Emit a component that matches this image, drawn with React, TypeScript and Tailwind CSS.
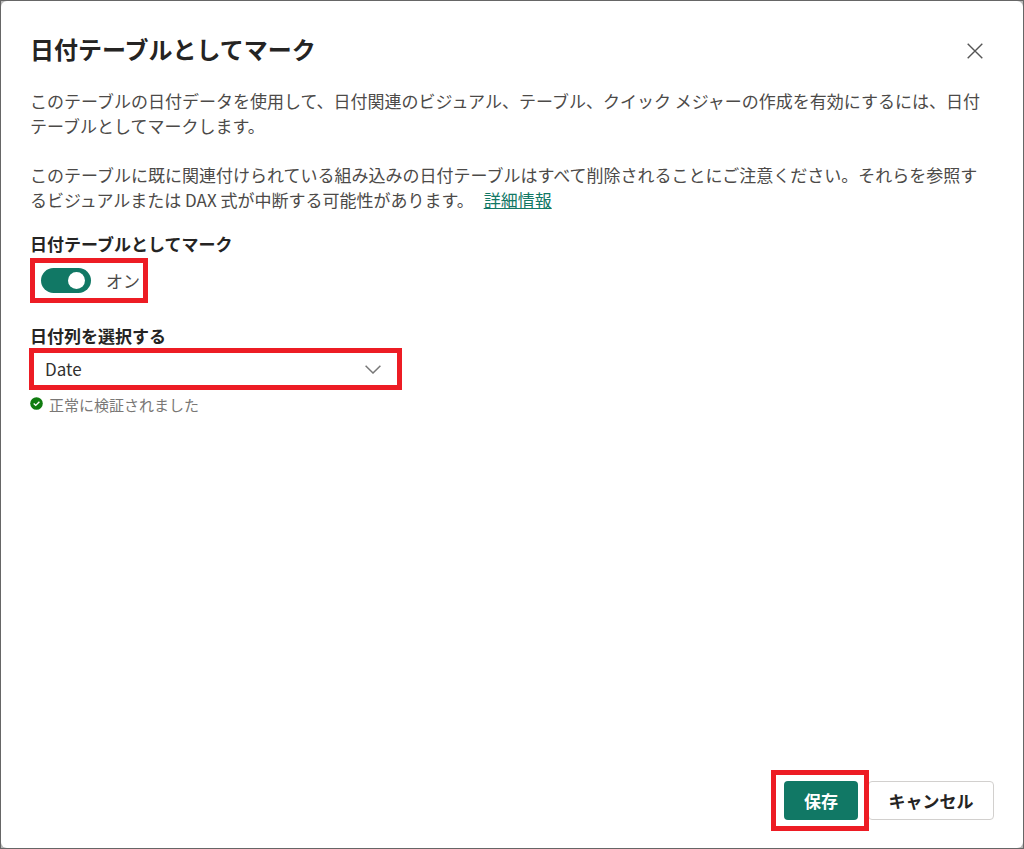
import { useState } from "react";

function CloseIcon() {
  return (
    <svg width="16" height="16" viewBox="0 0 16 16" fill="none" stroke="#555" strokeWidth="1.4" aria-hidden="true">
      <path d="M0.7 0.7 15.3 15.3M15.3 0.7 0.7 15.3" />
    </svg>
  );
}

function ChevronIcon() {
  return (
    <svg
      className="pointer-events-none absolute top-3 right-4"
      width="16"
      height="9"
      viewBox="0 0 16 9"
      fill="none"
      stroke="#777"
      strokeWidth="1.5"
      aria-hidden="true"
    >
      <path d="M0.6 0.7 8 8 15.4 0.7" />
    </svg>
  );
}

function CheckBadge() {
  return (
    <svg className="shrink-0" width="13" height="13" viewBox="0 0 13 13" aria-hidden="true">
      <circle cx="6.5" cy="6.5" r="6.3" fill="#107c10" />
      <path d="M3.7 6.6 5.7 8.4 9.4 4.8" fill="none" stroke="#fff" strokeWidth="1.4" />
    </svg>
  );
}

export default function App() {
  const [marked, setMarked] = useState(true);

  return (
    <div className="flex min-h-screen flex-col border border-[#666] bg-[#b8b8b8]">
      <main
        role="dialog"
        aria-labelledby="dialog-title"
        className="flex grow flex-col rounded-md bg-white px-7 pt-[30px] pb-[17px] font-['Noto_Sans_CJK_JP','Noto_Sans',sans-serif] text-[17px] leading-[25px] text-[#4c4a48]"
      >
        <header className="flex items-end justify-between pr-1 pl-px">
          <h1 id="dialog-title" className="text-2xl leading-9 font-bold text-[#252423]">
            日付テーブルとしてマーク
          </h1>
          <button type="button" aria-label="閉じる" className="p-2">
            <CloseIcon />
          </button>
        </header>

        <div className="mt-[21px] flex flex-col gap-6 pr-1 pl-px">
          <p>
            このテーブルの日付データを使用して、日付関連のビジュアル、テーブル、クイック メジャーの作成を有効にするには、日付テーブルとしてマークします。
          </p>
          <p>
            このテーブルに既に関連付けられている組み込みの日付テーブルはすべて削除されることにご注意ください。それらを参照するビジュアルまたは DAX 式が中断する可能性があります。{" "}
            <a href="#details" className="ml-1.5 inline-block text-[#117865] underline">
              詳細情報
            </a>
          </p>
        </div>

        <section className="mt-5 flex flex-col items-start pl-px">
          <label htmlFor="mark-table" className="mb-0.5 leading-6 font-bold text-[#252423]">
            日付テーブルとしてマーク
          </label>
          <div className="flex items-center border-5 border-[#ed1c24] pr-[3px] pl-1.5">
            <button
              id="mark-table"
              type="button"
              role="switch"
              aria-checked={marked}
              onClick={() => setMarked(!marked)}
              className={
                marked
                  ? "flex h-[25px] w-[50px] items-center justify-end rounded-full bg-[#117865] px-1.5"
                  : "flex h-[25px] w-[50px] items-center justify-start rounded-full bg-[#8a8886] px-1.5"
              }
            >
              <span className="size-[17px] rounded-full bg-white" />
            </button>
            <span className="ml-[15px] leading-[35px]">{marked ? "オン" : "オフ"}</span>
          </div>
        </section>

        <section className="mt-[21px] flex flex-col items-start">
          <label htmlFor="date-column" className="pl-px leading-6 font-bold text-[#252423]">
            日付列を選択する
          </label>
          <div className="relative w-[373px] max-w-full border-5 border-[#ed1c24]">
            <select
              id="date-column"
              className="block h-8 w-full appearance-none bg-white pr-9 pl-[11px] leading-8 text-[#323130]"
            >
              <option>Date</option>
            </select>
            <ChevronIcon />
          </div>
          <p className="mt-[3px] flex items-start gap-1.5 pl-px text-[15px] leading-6 text-[#797775]">
            <span className="pt-1">
              <CheckBadge />
            </span>
            正常に検証されました
          </p>
        </section>

        <footer className="mt-auto flex items-center justify-end pr-px font-bold">
          <div className="relative border-5 border-[#ed1c24] bg-white py-1.5 pr-1.5 pl-2">
            <button type="button" className="block h-[39px] w-[74px] rounded bg-[#117865] text-white">
              保存
            </button>
          </div>
          <button
            type="button"
            className="-ml-px h-[39px] w-[126px] rounded border border-[#d2d0ce] bg-white text-[#252423]"
          >
            キャンセル
          </button>
        </footer>
      </main>
    </div>
  );
}
